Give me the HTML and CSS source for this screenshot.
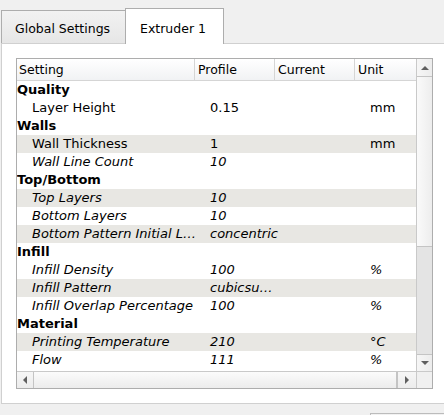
FILE: index.html
```html
<!DOCTYPE html>
<html>
<head>
<meta charset="utf-8">
<link rel="stylesheet" href="styles.css">
</head>
<body>
<div class="window">
  <div class="tabbar">
    <div class="tab tab-inactive">Global Settings</div>
    <div class="tab tab-active">Extruder 1</div>
  </div>
  <div class="panel">
    <div class="tree">
      <div class="viewport">
        <div class="header">
          <div class="hcell hc1">Setting</div>
          <div class="hcell hc2">Profile</div>
          <div class="hcell hc3">Current</div>
          <div class="hcell hc4">Unit</div>
        </div>
        <div class="rows">
          <div class="row section"><div class="c1">Quality</div><div class="c2"></div><div class="c3"></div><div class="c4"></div></div>
          <div class="row"><div class="c1 child">Layer Height</div><div class="c2">0.15</div><div class="c3"></div><div class="c4">mm</div></div>
          <div class="row section"><div class="c1">Walls</div><div class="c2"></div><div class="c3"></div><div class="c4"></div></div>
          <div class="row alt"><div class="c1 child">Wall Thickness</div><div class="c2">1</div><div class="c3"></div><div class="c4">mm</div></div>
          <div class="row it"><div class="c1 child">Wall Line Count</div><div class="c2">10</div><div class="c3"></div><div class="c4"></div></div>
          <div class="row section"><div class="c1">Top/Bottom</div><div class="c2"></div><div class="c3"></div><div class="c4"></div></div>
          <div class="row alt it"><div class="c1 child">Top Layers</div><div class="c2">10</div><div class="c3"></div><div class="c4"></div></div>
          <div class="row it"><div class="c1 child">Bottom Layers</div><div class="c2">10</div><div class="c3"></div><div class="c4"></div></div>
          <div class="row alt it"><div class="c1 child">Bottom Pattern Initial L…</div><div class="c2">concentric</div><div class="c3"></div><div class="c4"></div></div>
          <div class="row section"><div class="c1">Infill</div><div class="c2"></div><div class="c3"></div><div class="c4"></div></div>
          <div class="row it"><div class="c1 child">Infill Density</div><div class="c2">100</div><div class="c3"></div><div class="c4">%</div></div>
          <div class="row alt it"><div class="c1 child">Infill Pattern</div><div class="c2">cubicsu…</div><div class="c3"></div><div class="c4"></div></div>
          <div class="row it"><div class="c1 child">Infill Overlap Percentage</div><div class="c2">100</div><div class="c3"></div><div class="c4">%</div></div>
          <div class="row section"><div class="c1">Material</div><div class="c2"></div><div class="c3"></div><div class="c4"></div></div>
          <div class="row alt it"><div class="c1 child">Printing Temperature</div><div class="c2">210</div><div class="c3"></div><div class="c4">°C</div></div>
          <div class="row it"><div class="c1 child">Flow</div><div class="c2">111</div><div class="c3"></div><div class="c4">%</div></div>
        </div>
      </div>
      <div class="vscroll">
        <div class="sbtn sbtn-up"><span class="tri tri-up"></span></div>
        <div class="vthumb"></div>
        <div class="vtrack"></div>
        <div class="sbtn sbtn-down"><span class="tri tri-down"></span></div>
      </div>
      <div class="hscroll">
        <div class="hbtn hbtn-left"><span class="tri tri-left"></span></div>
        <div class="hthumb"></div>
        <div class="hbtn hbtn-right"><span class="tri tri-right"></span></div>
      </div>
      <div class="corner"></div>
    </div>
  </div>
  <div class="below">
    <div class="button-edge"></div>
  </div>
</div>
</body>
</html>
```

FILE: styles.css
```css
html, body {
  margin: 0;
  padding: 0;
  background: #f0f0f0;
  overflow: hidden;
  width: 444px;
  height: 415px;
}

.window {
  font-family: "DejaVu Sans", Verdana, sans-serif;
  font-size: 12.5px;
  color: #000;
  padding-left: 1px;
}

.tabbar {
  display: flex;
  align-items: flex-end;
  height: 43px;
  box-sizing: border-box;
}

.tab {
  box-sizing: border-box;
  display: flex;
  align-items: center;
  border: 1px solid #adadad;
  border-bottom: none;
}

.tab-inactive {
  width: 124px;
  height: 33px;
  padding-left: 13px;
  padding-top: 3px;
  background: linear-gradient(#f2f2f2, #e6e6e6);
  border-right: none;
}

.tab-active {
  width: 99px;
  height: 36px;
  padding-left: 14px;
  padding-top: 3px;
  background: #ffffff;
  position: relative;
  top: 1px;
  z-index: 2;
}

.panel {
  width: 443px;
  box-sizing: border-box;
  border: 1px solid #d0d0d0;
  border-right: none;
  background: #ffffff;
  padding: 14px 0 14px 14px;
}

.tree {
  width: 417px;
  height: 331px;
  box-sizing: border-box;
  border: 1px solid #adadad;
  display: grid;
  grid-template-columns: 399px 16px;
  grid-template-rows: 312px 17px;
  background: #ffffff;
}

.viewport {
  overflow: hidden;
  background: #ffffff;
}

.header {
  display: grid;
  grid-template-columns: 178px 80px 80px 61px;
  height: 22px;
  box-sizing: border-box;
  border-bottom: 1px solid #d5d5d5;
  background: linear-gradient(#ffffff, #f1f2f4);
}

.hcell {
  box-sizing: border-box;
  border-right: 1px solid #d5d5d5;
  padding-left: 2px;
  line-height: 21px;
  white-space: nowrap;
  overflow: hidden;
}

.hc2, .hc3, .hc4 {
  padding-left: 3px;
}

.hc4 {
  border-right: none;
}

.rows {
  font-size: 13px;
}

.row {
  display: grid;
  grid-template-columns: 178px 80px 80px 61px;
  height: 18px;
  line-height: 18px;
  white-space: nowrap;
}

.row > .c1 {
  overflow: hidden;
}

.row.alt {
  background: #e8e7e3;
}

.row.section {
  font-weight: bold;
}

.row.it {
  font-style: italic;
}

.c1.child {
  padding-left: 15px;
}

.c2, .c4 {
  padding-left: 15px;
}

.vscroll {
  box-sizing: border-box;
  border-left: 1px solid #c9c9c9;
  display: flex;
  flex-direction: column;
  background: #e6e6e6;
}

.sbtn {
  height: 17px;
  flex: none;
  display: flex;
  align-items: center;
  justify-content: center;
  background: linear-gradient(90deg, #f6f6f6, #ececec);
  box-sizing: border-box;
}

.vthumb {
  height: 171px;
  flex: none;
  box-sizing: border-box;
  border-top: 1px solid #c4c4c4;
  border-bottom: 1px solid #c4c4c4;
  background: linear-gradient(90deg, #fafafa, #ededed);
}

.vtrack {
  flex: 1;
  background: #e4e4e4;
}

.sbtn-down {
  border-top: 1px solid #c4c4c4;
}

.hscroll {
  box-sizing: border-box;
  border-top: 1px solid #c9c9c9;
  display: flex;
  background: #e6e6e6;
}

.hbtn {
  flex: none;
  display: flex;
  align-items: center;
  justify-content: center;
  background: linear-gradient(#f6f6f6, #ececec);
}

.hbtn-left {
  width: 16px;
  border-right: 1px solid #c4c4c4;
}

.hthumb {
  flex: 1;
  background: linear-gradient(#fbfbfb, #ececec);
  border-right: 1px solid #c4c4c4;
}

.hbtn-right {
  width: 18px;
  border-left: 1px solid #c4c4c4;
}

.corner {
  border-top: 1px solid #c9c9c9;
  border-left: 1px solid #c9c9c9;
  background: #f0f0f0;
}

.tri {
  width: 0;
  height: 0;
  display: block;
}

.tri-up {
  border-left: 4px solid transparent;
  border-right: 4px solid transparent;
  border-bottom: 4px solid #5f5f5f;
}

.tri-down {
  border-left: 4px solid transparent;
  border-right: 4px solid transparent;
  border-top: 4px solid #5f5f5f;
}

.tri-left {
  border-top: 4px solid transparent;
  border-bottom: 4px solid transparent;
  border-right: 4px solid #5f5f5f;
}

.tri-right {
  border-top: 4px solid transparent;
  border-bottom: 4px solid transparent;
  border-left: 4px solid #5f5f5f;
}

.below {
  height: 12px;
  padding-top: 9px;
  padding-left: 369px;
}

.button-edge {
  width: 74px;
  height: 10px;
  box-sizing: border-box;
  border: 1px solid #bcbcbc;
  border-bottom: none;
  border-right: none;
  background: linear-gradient(#f2f2f2, #e8e8e8);
}
```
